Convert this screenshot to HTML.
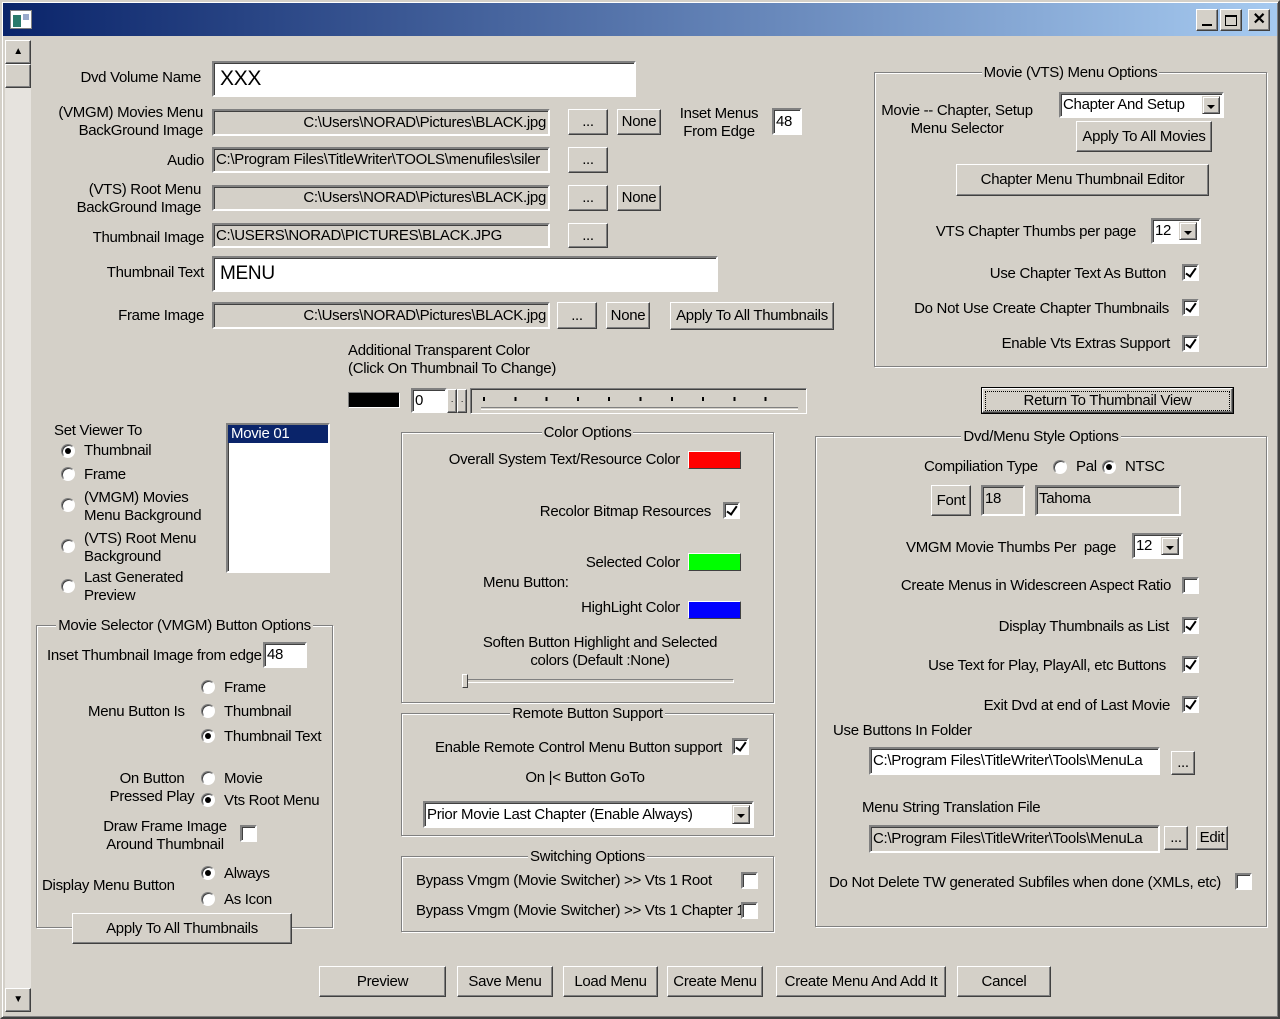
<!DOCTYPE html>
<html><head><meta charset="utf-8"><style>
*{box-sizing:border-box}
body{margin:0;width:1280px;height:1019px;background:#d4d0c8;font:15px/18px "Liberation Sans",sans-serif;color:#000;position:relative;overflow:hidden}
.t{position:absolute;white-space:nowrap;letter-spacing:-0.3px;margin-top:1px}
.r{text-align:right}
.c{text-align:center}
.s{position:absolute;background:#fff;border:2px solid;border-color:#808080 #fff #fff #808080;box-shadow:inset 1px 1px #404040;white-space:nowrap;overflow:hidden;padding:0 2px;letter-spacing:-0.3px;display:flex;align-items:center}
.d{background:#d4d0c8}
.b{position:absolute;border:1px solid;border-color:#fff #404040 #404040 #fff;box-shadow:inset -1px -1px #808080;display:flex;align-items:center;justify-content:center;white-space:nowrap;letter-spacing:-0.3px;background:#d4d0c8}
.g{position:absolute;border:1px solid #808080;box-shadow:1px 1px 0 #fff,inset 1px 1px 0 #fff}
.g>span{position:absolute;top:-9px;left:0;right:0;text-align:center;line-height:18px;letter-spacing:-0.3px}
.g>span i{font-style:normal;background:#d4d0c8;padding:0 2px}
.cb{position:absolute;width:17px;height:17px;background:#fff;border:2px solid;border-color:#808080 #fff #fff #808080;box-shadow:inset 1px 1px #404040}
.cb.k::after{content:"";position:absolute;left:4px;top:0px;width:4px;height:9px;border:solid #000;border-width:0 2px 2px 0;transform:rotate(35deg)}
.rd{position:absolute;width:14px;height:14px;border-radius:50%;background:#fff;border:1px solid;border-color:#808080 #fff #fff #808080;box-shadow:inset 1px 1px #404040}
.rd.on::after{content:"";position:absolute;left:3px;top:3px;width:6px;height:6px;border-radius:50%;background:#000}
.cmb{position:absolute;width:18px;top:2px;bottom:2px;right:2px;background:#d4d0c8;border:1px solid;border-color:#d4d0c8 #404040 #404040 #d4d0c8;box-shadow:inset 1px 1px #fff,inset -1px -1px #808080}
.cmb::after{content:"";position:absolute;left:4px;top:8px;border:4px solid transparent;border-top:4px solid #000;border-bottom:0}
</style></head><body>
<div style="position:absolute;left:0;top:0;width:1280px;height:1019px;border:2px solid;border-color:#d4d0c8 #404040 #404040 #d4d0c8;box-shadow:inset 1px 1px #fff,inset -1px -1px #808080"></div>
<div style="position:absolute;left:3px;top:3px;width:1274px;height:33px;background:linear-gradient(90deg,#0a246a,#a6caf0)"></div>
<div style="position:absolute;left:10px;top:10px;width:22px;height:19px;background:#fff;border:1px solid #808080"><div style="position:absolute;left:2px;top:4px;width:8px;height:12px;background:#2a7a6a"></div><div style="position:absolute;left:12px;top:3px;width:6px;height:6px;background:#9ac"></div></div>
<div class="b" style="left:1196px;top:9px;width:22px;height:22px"><div style="width:10px;height:2px;background:#000;margin-top:10px"></div></div>
<div class="b" style="left:1220px;top:9px;width:22px;height:22px"><div style="width:12px;height:11px;border:1px solid #000;border-top-width:2px"></div></div>
<div class="b" style="left:1248px;top:9px;width:22px;height:22px;font-weight:bold;font-size:16px">✕</div>
<div style="position:absolute;left:5px;top:40px;width:26px;height:972px;background:#e6e3de"></div>
<div class="b" style="left:5px;top:40px;width:26px;height:24px;font-size:10px">▲</div>
<div class="b" style="left:5px;top:64px;width:26px;height:24px"></div>
<div class="b" style="left:5px;top:988px;width:26px;height:24px;font-size:10px">▼</div>

<div class="t r" style="right:1079px;top:68px">Dvd Volume Name</div>
<div class="s" style="left:212px;top:61px;width:424px;height:36px;font-size:21px;padding-left:6px">XXX</div>
<div class="t r" style="right:1077px;top:103px;line-height:18px">(VMGM) Movies Menu<br>BackGround Image</div>
<div class="s d" style="left:212px;top:109px;width:338px;height:27px;justify-content:flex-end">C:\Users\NORAD\Pictures\BLACK.jpg</div>
<div class="b" style="left:568px;top:109px;width:40px;height:26px">...</div>
<div class="b" style="left:617px;top:109px;width:44px;height:26px">None</div>
<div class="t c" style="left:672px;top:104px;width:94px">Inset Menus<br>From Edge</div>
<div class="s" style="left:772px;top:108px;width:30px;height:27px">48</div>
<div class="t r" style="right:1076px;top:151px">Audio</div>
<div class="s d" style="left:212px;top:147px;width:338px;height:26px">C:\Program Files\TitleWriter\TOOLS\menufiles\siler</div>
<div class="b" style="left:568px;top:147px;width:40px;height:26px">...</div>
<div class="t r" style="right:1079px;top:180px">(VTS) Root Menu<br>BackGround Image</div>
<div class="s d" style="left:212px;top:185px;width:338px;height:26px;justify-content:flex-end">C:\Users\NORAD\Pictures\BLACK.jpg</div>
<div class="b" style="left:568px;top:185px;width:40px;height:26px">...</div>
<div class="b" style="left:617px;top:185px;width:44px;height:26px">None</div>
<div class="t r" style="right:1076px;top:228px">Thumbnail Image</div>
<div class="s d" style="left:212px;top:223px;width:338px;height:25px">C:\USERS\NORAD\PICTURES\BLACK.JPG</div>
<div class="b" style="left:568px;top:223px;width:40px;height:25px">...</div>
<div class="t r" style="right:1076px;top:263px">Thumbnail Text</div>
<div class="s" style="left:212px;top:256px;width:506px;height:36px;font-size:19px;padding-left:6px">MENU</div>
<div class="t r" style="right:1076px;top:306px">Frame Image</div>
<div class="s d" style="left:212px;top:302px;width:338px;height:27px;justify-content:flex-end">C:\Users\NORAD\Pictures\BLACK.jpg</div>
<div class="b" style="left:557px;top:302px;width:40px;height:27px">...</div>
<div class="b" style="left:606px;top:302px;width:44px;height:27px">None</div>
<div class="b" style="left:670px;top:302px;width:164px;height:28px">Apply To All Thumbnails</div>
<div class="t" style="left:348px;top:341px">Additional Transparent Color<br>(Click On Thumbnail To Change)</div>
<div style="position:absolute;left:348px;top:392px;width:52px;height:16px;background:#000;border:1px solid;border-color:#808080 #fff #fff #808080"></div>
<div class="s" style="left:411px;top:388px;width:36px;height:25px">0</div>
<div class="b" style="left:447px;top:389px;width:10px;height:24px;font-size:9px">·</div>
<div class="b" style="left:457px;top:389px;width:10px;height:24px;font-size:9px">·</div>
<div style="position:absolute;left:470px;top:388px;width:337px;height:26px;border:1px solid;border-color:#808080 #fff #fff #808080;box-shadow:inset 1px 1px #404040">
<div style="position:absolute;left:10px;right:8px;top:18px;height:3px;border-top:1px solid #808080;border-bottom:1px solid #fff"></div>
<div style="position:absolute;left:12px;right:10px;top:8px;height:4px;background:repeating-linear-gradient(90deg,#000 0 2px,transparent 2px 31.3px)"></div>
</div>
<div style="position:absolute;left:981px;top:387px;width:253px;height:27px;border:1px solid #000"><div class="b" style="left:0;top:0;right:0;bottom:0;position:absolute"><span style="outline:1px dotted #000;padding:0 38px">Return To Thumbnail View</span></div></div>

<div class="g" style="left:874px;top:72px;width:393px;height:295px"><span><i>Movie (VTS) Menu Options</i></span></div>
<div class="t c" style="left:872px;top:101px;width:170px">Movie -- Chapter, Setup<br>Menu Selector</div>
<div class="s" style="left:1059px;top:92px;width:165px;height:26px">Chapter And Setup<div class="cmb"></div></div>
<div class="b" style="left:1076px;top:121px;width:136px;height:31px">Apply To All Movies</div>
<div class="b" style="left:956px;top:164px;width:253px;height:32px">Chapter Menu Thumbnail Editor</div>
<div class="t r" style="right:144px;top:222px">VTS Chapter Thumbs per page</div>
<div class="s" style="left:1151px;top:218px;width:50px;height:26px">12<div class="cmb"></div></div>
<div class="t r" style="right:114px;top:264px">Use Chapter Text As Button</div><div class="cb k" style="left:1182px;top:264px"></div>
<div class="t r" style="right:111px;top:299px">Do Not Use Create Chapter Thumbnails</div><div class="cb k" style="left:1182px;top:299px"></div>
<div class="t r" style="right:110px;top:334px">Enable Vts Extras Support</div><div class="cb k" style="left:1182px;top:335px"></div>

<div class="t" style="left:54px;top:421px">Set Viewer To</div>
<div class="rd on" style="left:61px;top:444px"></div><div class="t" style="left:84px;top:441px">Thumbnail</div>
<div class="rd" style="left:61px;top:467px"></div><div class="t" style="left:84px;top:465px">Frame</div>
<div class="rd" style="left:61px;top:498px"></div><div class="t" style="left:84px;top:488px">(VMGM) Movies<br>Menu Background</div>
<div class="rd" style="left:61px;top:539px"></div><div class="t" style="left:84px;top:529px">(VTS) Root Menu<br>Background</div>
<div class="rd" style="left:61px;top:579px"></div><div class="t" style="left:84px;top:568px">Last Generated<br>Preview</div>
<div class="s" style="left:226px;top:423px;width:104px;height:150px;align-items:flex-start;padding:0"><div style="background:#0a246a;color:#fff;width:100%;padding-left:3px;height:18px">Movie 01</div></div>

<div class="g" style="left:36px;top:625px;width:297px;height:303px"><span><i>Movie Selector (VMGM) Button Options</i></span></div>
<div class="t" style="left:47px;top:646px">Inset Thumbnail Image from edge</div>
<div class="s" style="left:263px;top:642px;width:44px;height:26px">48</div>
<div class="t" style="left:88px;top:702px">Menu Button Is</div>
<div class="rd" style="left:201px;top:680px"></div><div class="t" style="left:224px;top:678px">Frame</div>
<div class="rd" style="left:201px;top:704px"></div><div class="t" style="left:224px;top:702px">Thumbnail</div>
<div class="rd on" style="left:201px;top:729px"></div><div class="t" style="left:224px;top:727px">Thumbnail Text</div>
<div class="t c" style="left:100px;top:769px;width:104px">On Button<br>Pressed Play</div>
<div class="rd" style="left:201px;top:771px"></div><div class="t" style="left:224px;top:769px">Movie</div>
<div class="rd on" style="left:201px;top:793px"></div><div class="t" style="left:224px;top:791px">Vts Root Menu</div>
<div class="t c" style="left:95px;top:817px;width:140px">Draw Frame Image<br>Around Thumbnail</div>
<div class="cb" style="left:240px;top:825px"></div>
<div class="t" style="left:42px;top:876px">Display Menu Button</div>
<div class="rd on" style="left:201px;top:866px"></div><div class="t" style="left:224px;top:864px">Always</div>
<div class="rd" style="left:201px;top:892px"></div><div class="t" style="left:224px;top:890px">As Icon</div>
<div class="b" style="left:72px;top:913px;width:220px;height:31px">Apply To All Thumbnails</div>

<div class="g" style="left:401px;top:432px;width:373px;height:271px"><span><i>Color Options</i></span></div>
<div class="t r" style="right:600px;top:450px">Overall System Text/Resource Color</div>
<div style="position:absolute;left:688px;top:451px;width:53px;height:18px;background:#f00;border:1px solid;border-color:#fff #404040 #404040 #fff"></div>
<div class="t r" style="right:569px;top:502px">Recolor Bitmap Resources</div><div class="cb k" style="left:723px;top:502px"></div>
<div class="t r" style="right:600px;top:553px">Selected Color</div>
<div style="position:absolute;left:688px;top:553px;width:53px;height:18px;background:#0f0;border:1px solid;border-color:#fff #404040 #404040 #fff"></div>
<div class="t" style="left:483px;top:573px">Menu Button:</div>
<div class="t r" style="right:600px;top:598px">HighLight Color</div>
<div style="position:absolute;left:688px;top:601px;width:53px;height:18px;background:#00f;border:1px solid;border-color:#fff #404040 #404040 #fff"></div>
<div class="t c" style="left:440px;top:633px;width:320px">Soften Button Highlight and Selected<br>colors (Default :None)</div>
<div style="position:absolute;left:463px;top:679px;width:271px;height:4px;border:1px solid;border-color:#808080 #fff #fff #808080"></div>
<div style="position:absolute;left:462px;top:674px;width:6px;height:14px;border:1px solid;border-color:#fff #404040 #404040 #fff;background:#d4d0c8"></div>

<div class="g" style="left:401px;top:713px;width:373px;height:123px"><span><i>Remote Button Support</i></span></div>
<div class="t r" style="right:558px;top:738px">Enable Remote Control Menu Button support</div><div class="cb k" style="left:732px;top:738px"></div>
<div class="t c" style="left:500px;top:768px;width:170px">On |&lt; Button GoTo</div>
<div class="s" style="left:423px;top:801px;width:331px;height:27px">Prior Movie Last Chapter (Enable Always)<div class="cmb"></div></div>

<div class="g" style="left:401px;top:856px;width:373px;height:76px"><span><i>Switching Options</i></span></div>
<div class="t" style="left:416px;top:871px">Bypass Vmgm (Movie Switcher) &gt;&gt; Vts 1 Root</div><div class="cb" style="left:741px;top:872px"></div>
<div class="t" style="left:416px;top:901px">Bypass Vmgm (Movie Switcher) &gt;&gt; Vts 1 Chapter 1</div><div class="cb" style="left:741px;top:902px"></div>

<div class="g" style="left:815px;top:436px;width:452px;height:491px"><span><i>Dvd/Menu Style Options</i></span></div>
<div class="t" style="left:924px;top:457px">Compiliation Type</div>
<div class="rd" style="left:1053px;top:460px"></div><div class="t" style="left:1076px;top:457px">Pal</div>
<div class="rd on" style="left:1102px;top:460px"></div><div class="t" style="left:1125px;top:457px">NTSC</div>
<div class="b" style="left:931px;top:485px;width:40px;height:31px">Font</div>
<div class="s d" style="left:981px;top:485px;width:44px;height:31px;align-items:flex-start;padding-top:3px">18</div>
<div class="s d" style="left:1035px;top:485px;width:146px;height:31px;align-items:flex-start;padding-top:3px">Tahoma</div>
<div class="t" style="left:906px;top:538px">VMGM Movie Thumbs Per &nbsp;page</div>
<div class="s" style="left:1132px;top:533px;width:51px;height:26px">12<div class="cmb"></div></div>
<div class="t r" style="right:109px;top:576px">Create Menus in Widescreen Aspect Ratio</div><div class="cb" style="left:1182px;top:577px"></div>
<div class="t r" style="right:111px;top:617px">Display Thumbnails as List</div><div class="cb k" style="left:1182px;top:617px"></div>
<div class="t r" style="right:114px;top:656px">Use Text for Play, PlayAll, etc Buttons</div><div class="cb k" style="left:1182px;top:656px"></div>
<div class="t r" style="right:110px;top:696px">Exit Dvd at end of Last Movie</div><div class="cb k" style="left:1182px;top:696px"></div>
<div class="t" style="left:833px;top:721px">Use Buttons In Folder</div>
<div class="s" style="left:869px;top:747px;width:291px;height:28px">C:\Program Files\TitleWriter\Tools\MenuLa</div>
<div class="b" style="left:1171px;top:751px;width:24px;height:24px">...</div>
<div class="t" style="left:862px;top:798px">Menu String Translation File</div>
<div class="s d" style="left:869px;top:825px;width:291px;height:28px">C:\Program Files\TitleWriter\Tools\MenuLa</div>
<div class="b" style="left:1164px;top:826px;width:24px;height:24px">...</div>
<div class="b" style="left:1196px;top:826px;width:32px;height:24px">Edit</div>
<div class="t" style="left:829px;top:873px">Do Not Delete TW generated Subfiles when done (XMLs, etc)</div><div class="cb" style="left:1235px;top:873px"></div>

<div class="b" style="left:319px;top:966px;width:127px;height:31px">Preview</div>
<div class="b" style="left:457px;top:966px;width:96px;height:31px">Save Menu</div>
<div class="b" style="left:563px;top:966px;width:95px;height:31px">Load Menu</div>
<div class="b" style="left:667px;top:966px;width:96px;height:31px">Create Menu</div>
<div class="b" style="left:776px;top:966px;width:170px;height:31px">Create Menu And Add It</div>
<div class="b" style="left:957px;top:966px;width:94px;height:31px">Cancel</div>
</body></html>
